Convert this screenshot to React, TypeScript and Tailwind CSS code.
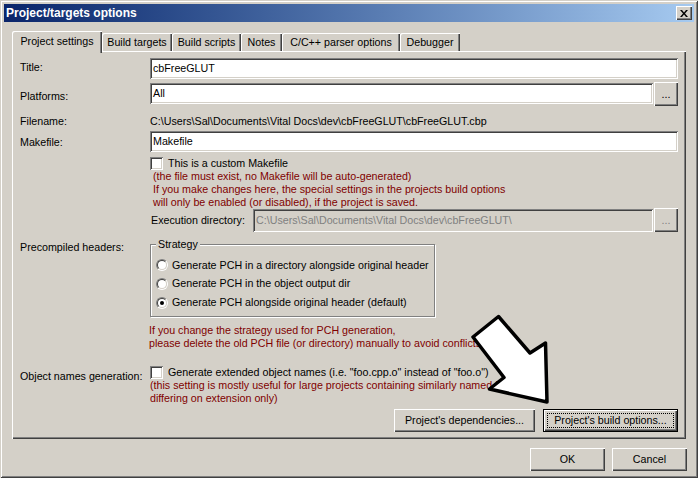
import React from 'react'

// Win2000-style "Project/targets options" dialog

const raised = 'shadow-[inset_1px_1px_#ffffff,inset_-1px_-1px_#404040,inset_-2px_-2px_#808080]'
const sunken = 'shadow-[inset_1px_1px_#808080,inset_-1px_-1px_#ffffff,inset_2px_2px_#404040,inset_-2px_-2px_#d4d0c8]'

function Button({ w, h = 23, children, focused = false }: { w: number; h?: number; children: React.ReactNode; focused?: boolean }) {
  return (
    <div
      style={{ width: w, height: h }}
      className={`relative shrink-0 flex items-center justify-center bg-[#d4d0c8] ${raised} ${focused ? 'border border-black' : ''}`}
    >
      {children}
      {focused && <div className="absolute inset-[3px] border border-dotted border-black" />}
    </div>
  )
}

function Input({ value, h = 21, disabled = false }: { value: string; h?: number; disabled?: boolean }) {
  return (
    <div
      style={{ height: h }}
      className={`flex-1 min-w-0 flex items-center pl-[3px] whitespace-nowrap overflow-hidden ${sunken} ${
        disabled ? 'bg-[#d4d0c8] text-[#808080]' : 'bg-white text-black'
      }`}
    >
      {value}
    </div>
  )
}

function Checkbox() {
  return <div className={`w-[13px] h-[13px] shrink-0 bg-white ${sunken}`} />
}

function Radio({ checked = false }: { checked?: boolean }) {
  return (
    <div className="w-[12px] h-[12px] shrink-0 rounded-full border border-t-[#808080] border-l-[#808080] border-b-white border-r-white">
      <div className="w-full h-full rounded-full bg-white border border-t-[#404040] border-l-[#404040] border-b-[#d4d0c8] border-r-[#d4d0c8] flex items-center justify-center">
        {checked && <div className="w-[4px] h-[4px] rounded-full bg-black" />}
      </div>
    </div>
  )
}

function Tab({ w, label, active = false }: { w: number; label: string; active?: boolean }) {
  if (active) {
    return (
      <div
        style={{ width: w }}
        className="relative z-10 h-[22px] -mb-[2px] bg-[#d4d0c8] rounded-tl-[2px] flex justify-center pt-[4px] shadow-[inset_1px_1px_#ffffff,inset_-1px_0_#404040,inset_-2px_0_#808080]"
      >
        {label}
      </div>
    )
  }
  return (
    <div
      style={{ width: w }}
      className="h-[18px] bg-[#d4d0c8] rounded-tl-[2px] flex items-center justify-center shadow-[inset_1px_1px_#ffffff,inset_-1px_0_#404040,inset_-2px_0_#808080]"
    >
      {label}
    </div>
  )
}

const red = 'text-[#800000]'

export default function App() {
  return (
    <div className="relative w-[698px] h-[478px] overflow-hidden bg-[#d4d0c8] p-[4px] flex flex-col font-[Tahoma,'Liberation_Sans',Arial,sans-serif] text-[10.7px] leading-[13px] text-black shadow-[inset_1px_1px_#d4d0c8,inset_-1px_-1px_#404040,inset_2px_2px_#ffffff,inset_-2px_-2px_#808080]">
      {/* title bar */}
      <div className="h-[18px] shrink-0 flex items-center justify-between pl-[2px] pr-[2px] bg-gradient-to-r from-[#0a246a] to-[#a6caf0]">
        <span className="text-white font-bold text-[12px] leading-[14px]">Project/targets options</span>
        <div className={`w-[16px] h-[14px] bg-[#d4d0c8] flex items-center justify-center ${raised}`}>
          <svg width="8" height="7" viewBox="0 0 8 7">
            <path d="M0 0h2l2 2.5L6 0h2L5 3.5 8 7H6L4 4.5 2 7H0l3-3.5z" fill="#000" />
          </svg>
        </div>
      </div>

      <div className="px-[8px] flex flex-col">
        {/* tabs */}
        <div className="mt-[9px] h-[20px] flex items-end">
          <Tab w={90} label="Project settings" active />
          <Tab w={70} label="Build targets" />
          <Tab w={69} label="Build scripts" />
          <Tab w={41} label="Notes" />
          <Tab w={118} label="C/C++ parser options" />
          <Tab w={60} label="Debugger" />
        </div>

        {/* panel */}
        <div className={`flex flex-col pt-[7px] pl-[8px] pr-[8px] pb-[7px] bg-[#d4d0c8] ${raised}`}>
          <div className="flex items-start h-[21px]">
            <div className="w-[130px] shrink-0 mt-[3px]">Title:</div>
            <Input value="cbFreeGLUT" />
          </div>

          <div className="flex items-start h-[24px] mt-[3px]">
            <div className="w-[130px] shrink-0 mt-[8px]">Platforms:</div>
            <div className="flex-1 flex items-start mt-[1px]">
              <Input value="All" />
            </div>
            <div className="ml-[1px]">
              <Button w={24} h={24}>...</Button>
            </div>
          </div>

          <div className="flex items-center h-[13px] mt-[9px]">
            <div className="w-[130px] shrink-0">Filename:</div>
            <div className="whitespace-nowrap">C:\Users\Sal\Documents\Vital Docs\dev\cbFreeGLUT\cbFreeGLUT.cbp</div>
          </div>

          <div className="flex items-start h-[21px] mt-[3px]">
            <div className="w-[130px] shrink-0 mt-[5px]">Makefile:</div>
            <Input value="Makefile" />
          </div>

          <div className="flex">
            <div className="w-[130px] shrink-0" />
            <div className="flex-1 flex flex-col">
              <div className="flex items-center gap-[5px] h-[13px] mt-[5px]">
                <Checkbox />
                <span>This is a custom Makefile</span>
              </div>
              <div className={`pl-[3px] whitespace-nowrap ${red}`}>
                <div>(the file must exist, no Makefile will be auto-generated)</div>
                <div>If you make changes here, the special settings in the projects build options</div>
                <div>will only be enabled (or disabled), if the project is saved.</div>
              </div>
              <div className="flex items-start h-[24px] -mt-[1px]">
                <div className="w-[103px] shrink-0 pl-[1px] mt-[6px]">Execution directory:</div>
                <div className="flex-1 flex mt-[1px]">
                  <Input value={'C:\\Users\\Sal\\Documents\\Vital Docs\\dev\\cbFreeGLUT\\'} h={23} disabled />
                </div>
                <div className="ml-[1px]">
                  <Button w={24} h={24}>
                    <span className="text-[#808080]">...</span>
                  </Button>
                </div>
              </div>
            </div>
          </div>

          {/* precompiled headers */}
          <div className="flex items-start mt-[12px]">
            <div className="w-[130px] shrink-0 -mt-[3px]">Precompiled headers:</div>
            <div className="flex flex-col">
              <div className="relative w-[285px] h-[73px] border border-[#808080] shadow-[inset_1px_1px_#ffffff,1px_1px_#ffffff] pt-[11px] pl-[5px]">
                <span className="absolute left-[5px] -top-[7px] px-[2px] bg-[#d4d0c8]">Strategy</span>
                <div className="flex items-center gap-[4px] h-[18px] whitespace-nowrap">
                  <Radio />
                  <span>Generate PCH in a directory alongside original header</span>
                </div>
                <div className="flex items-center gap-[4px] h-[19px] whitespace-nowrap">
                  <Radio />
                  <span>Generate PCH in the object output dir</span>
                </div>
                <div className="flex items-center gap-[4px] h-[19px] whitespace-nowrap">
                  <Radio checked />
                  <span>Generate PCH alongside original header (default)</span>
                </div>
              </div>
              <div className={`mt-[7px] -ml-[1px] whitespace-nowrap ${red}`}>
                <div>If you change the strategy used for PCH generation,</div>
                <div>please delete the old PCH file (or directory) manually to avoid conflicts.</div>
              </div>
            </div>
          </div>

          {/* object names */}
          <div className="flex items-start mt-[16px]">
            <div className="w-[130px] shrink-0 mt-[4px] whitespace-nowrap">Object names generation:</div>
            <div className="flex flex-col">
              <div className="flex items-center gap-[5px] h-[13px] whitespace-nowrap">
                <Checkbox />
                <span>Generate extended object names (i.e. "foo.cpp.o" instead of "foo.o")</span>
              </div>
              <div className={`whitespace-nowrap ${red}`}>
                <div>(this setting is mostly useful for large projects containing similarly named files</div>
                <div>differing on extension only)</div>
              </div>
            </div>
          </div>

          <div className="flex justify-end gap-[8px] mt-[4px]">
            <Button w={141}>Project's dependencies...</Button>
            <Button w={135} focused>
              Project's build options...
            </Button>
          </div>
        </div>
      </div>

      {/* dialog buttons */}
      <div className="flex justify-end gap-[7px] pr-[7px] mt-[9px]">
        <Button w={75}>OK</Button>
        <Button w={75}>Cancel</Button>
      </div>

      {/* annotation arrow */}
      <svg className="absolute left-0 top-0 pointer-events-none" width="698" height="478" viewBox="0 0 698 478">
        <polygon
          points="473,337 498.5,316.5 530,353 545.5,343 547,402 489.5,389 504,377.5"
          fill="#ffffff"
          stroke="#000000"
          strokeWidth="3.5"
          strokeLinejoin="round"
        />
      </svg>
    </div>
  )
}
